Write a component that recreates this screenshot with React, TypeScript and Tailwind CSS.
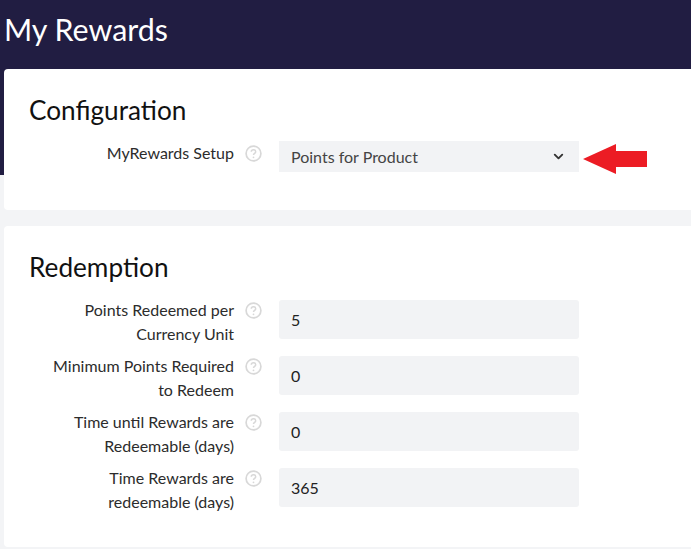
import { ChevronDown } from "lucide-react";

const Help = () => (
  <svg width="17" height="17" viewBox="0 0 17 17" fill="none" className="mt-[2px] ml-[11px] shrink-0">
    <circle cx="8.5" cy="8.5" r="7.4" stroke="#d8d8d8" strokeWidth="1.7" />
    <path d="M6.3 6.8c0-1.3 1-2.1 2.2-2.1s2.2.8 2.2 2c0 1.7-2.2 1.7-2.2 3.4" stroke="#d8d8d8" strokeWidth="1.5" />
    <circle cx="8.5" cy="12.3" r="0.9" fill="#d8d8d8" />
  </svg>
);

const Row = ({ label, value }: { label: string[]; value: string }) => (
  <div className="flex h-[56px]">
    <div className="w-[230px] text-right text-[16px] leading-[24px] text-[#2c2c2c] -mt-[2px]">
      {label.map((l) => (
        <div key={l}>{l}</div>
      ))}
    </div>
    <Help />
    <div className="ml-[17px] w-[300px] h-[39px] rounded-[3px] bg-[#f2f3f5] px-3 flex items-center text-[16px] text-[#222]">
      {value}
    </div>
  </div>
);

const rows = [
  { label: ["Points Redeemed per", "Currency Unit"], value: "5" },
  { label: ["Minimum Points Required", "to Redeem"], value: "0" },
  { label: ["Time until Rewards are", "Redeemable (days)"], value: "0" },
  { label: ["Time Rewards are", "redeemable (days)"], value: "365" },
];

export default function App() {
  return (
    <div className="w-[697px] h-[549px] bg-white overflow-hidden" style={{ fontFamily: "Lato, sans-serif" }}>
      <div className="w-[691px] h-[549px] bg-[#f3f4f6]">
        {/* Header */}
        <div className="h-[175px] bg-[#211d42] pl-[4px] pt-[9px]">
          <h1 className="text-[30.4px] leading-[40px] text-white">My Rewards</h1>
        </div>

        {/* Configuration */}
        <div className="ml-[4px] -mt-[106px] h-[141px] rounded-l-[4px] bg-white pl-[25px] pt-[23px]">
          <h2 className="text-[26.2px] leading-[36px] text-[#111]">Configuration</h2>
          <div className="flex -ml-[25px] mt-[13px]">
            <div className="w-[230px] text-right text-[16px] leading-[24px] text-[#2c2c2c]">MyRewards Setup</div>
            <div className="mt-[2px]">
              <Help />
            </div>
            <div className="ml-[17px] w-[300px] h-[31px] bg-[#f2f3f5] pl-3 pr-[13px] flex items-center justify-between text-[16px] text-[#444]">
              Points for Product
              <ChevronDown size={15} strokeWidth={3} className="text-[#333]" />
            </div>
            <svg width="66" height="34" viewBox="0 0 66 34" className="ml-[3px] shrink-0">
              <path d="M1 18 L34 3 V10 H65 V26 H34 V33 Z" fill="#ec1c24" />
            </svg>
          </div>
        </div>

        {/* Redemption */}
        <div className="ml-[4px] mt-[16px] h-[321px] rounded-l-[4px] bg-white pl-[25px] pt-[23px]">
          <h2 className="text-[26.2px] leading-[36px] text-[#111]">Redemption</h2>
          <div className="-ml-[25px] mt-[15px]">
            {rows.map((r) => (
              <Row key={r.value + r.label[0]} label={r.label} value={r.value} />
            ))}
          </div>
        </div>
      </div>
    </div>
  );
}
